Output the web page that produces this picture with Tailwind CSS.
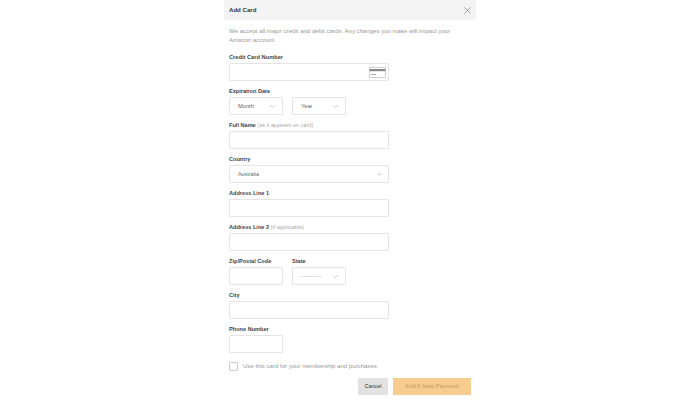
<!DOCTYPE html>
<html lang="en">
<head>
  <meta charset="UTF-8">
  <title>Add Card</title>
  <script src="https://cdn.jsdelivr.net/npm/@tailwindcss/browser@4"></script>
</head>
<body class="bg-white font-['Liberation_Sans',Arial,sans-serif] overflow-hidden">
  <div class="w-[700px] h-[400px] flex justify-center">
    <div class="w-[252px] h-[400px] bg-white">
      <div class="h-[20px] bg-[#f3f4f3] pl-[5px] pr-[5px] flex items-center justify-between">
        <h1 class="text-[6.1px] font-bold text-[#333]">Add Card</h1>
        <svg class="w-[7px] h-[7px]" viewBox="0 0 7 7" fill="none" stroke="#777" stroke-width="0.7"><path d="M0.3 0.3 L6.7 6.7 M6.7 0.3 L0.3 6.7"/></svg>
      </div>

      <div class="pl-[5px] pr-[5px]">
        <p class="mt-[7px] h-[24px] w-[230px] text-[6.05px] leading-[9px] text-[#999]">We accept all major credit and debit cards. Any changes you make will impact your Amazon account.</p>

        <div class="flex flex-col gap-[4px]">
          <div>
            <label class="block h-[12px] leading-[12px] text-[5.7px] font-bold text-[#444]">Credit Card Number</label>
            <div class="w-[160px] h-[18px] border border-[#e4e4e4] rounded-[1px] flex items-center justify-end pr-[2px]">
              <svg class="w-[17px] h-[11px]" viewBox="0 0 17 11" fill="none"><rect x="0.5" y="0.5" width="16" height="10" stroke="#bbb" stroke-width="0.7"/><rect x="0.5" y="2" width="16" height="2.2" fill="#888"/><rect x="2" y="7" width="5" height="0.8" fill="#999"/></svg>
            </div>
          </div>

          <div>
            <label class="block h-[12px] leading-[12px] text-[5.6px] font-bold text-[#444]">Expiration Date</label>
            <div class="flex gap-[9px]">
              <div class="w-[54px] h-[18px] border border-[#e4e4e4] rounded-[1px] flex items-center justify-between pl-[8px] pr-[7px] text-[5.7px] text-[#666]">
                <span>Month</span>
                <svg class="w-[5px] h-[3px]" viewBox="0 0 5 3" fill="none" stroke="#aaa" stroke-width="0.6"><path d="M0.3 0.5 L2.5 2.3 L4.7 0.5"/></svg>
              </div>
              <div class="w-[54px] h-[18px] border border-[#e4e4e4] rounded-[1px] flex items-center justify-between pl-[8px] pr-[7px] text-[5.7px] text-[#666]">
                <span>Year</span>
                <svg class="w-[5px] h-[3px]" viewBox="0 0 5 3" fill="none" stroke="#aaa" stroke-width="0.6"><path d="M0.3 0.5 L2.5 2.3 L4.7 0.5"/></svg>
              </div>
            </div>
          </div>

          <div>
            <label class="block h-[12px] leading-[12px] text-[5.6px] font-bold text-[#444]">Full Name <span class="font-normal text-[#aaa]">(as it appears on card)</span></label>
            <div class="w-[160px] h-[18px] border border-[#e4e4e4] rounded-[1px]"></div>
          </div>

          <div>
            <label class="block h-[12px] leading-[12px] text-[5.6px] font-bold text-[#444]">Country</label>
            <div class="w-[160px] h-[18px] border border-[#e4e4e4] rounded-[1px] flex items-center justify-between pl-[8px] pr-[6px] text-[5.4px] text-[#666]">
              <span>Australia</span>
              <svg class="w-[5px] h-[3px]" viewBox="0 0 5 3" fill="none" stroke="#aaa" stroke-width="0.6"><path d="M0.3 0.5 L2.5 2.3 L4.7 0.5"/></svg>
            </div>
          </div>

          <div>
            <label class="block h-[12px] leading-[12px] text-[5.6px] font-bold text-[#444]">Address Line 1</label>
            <div class="w-[160px] h-[18px] border border-[#e4e4e4] rounded-[1px]"></div>
          </div>

          <div>
            <label class="block h-[12px] leading-[12px] text-[5.6px] font-bold text-[#444]">Address Line 2 <span class="font-normal text-[#aaa]">(if applicable)</span></label>
            <div class="w-[160px] h-[18px] border border-[#e4e4e4] rounded-[1px]"></div>
          </div>

          <div class="flex gap-[9px]">
            <div>
              <label class="block h-[12px] leading-[12px] text-[5.6px] font-bold text-[#444]">Zip/Postal Code</label>
              <div class="w-[54px] h-[18px] border border-[#e4e4e4] rounded-[1px]"></div>
            </div>
            <div>
              <label class="block h-[12px] leading-[12px] text-[5.6px] font-bold text-[#444]">State</label>
              <div class="w-[54px] h-[18px] border border-[#e4e4e4] rounded-[1px] flex items-center justify-between pl-[8px] pr-[7px] text-[5.7px] text-[#aaa]">
                <span>-----------</span>
                <svg class="w-[5px] h-[3px]" viewBox="0 0 5 3" fill="none" stroke="#aaa" stroke-width="0.6"><path d="M0.3 0.5 L2.5 2.3 L4.7 0.5"/></svg>
              </div>
            </div>
          </div>

          <div>
            <label class="block h-[12px] leading-[12px] text-[5.6px] font-bold text-[#444]">City</label>
            <div class="w-[160px] h-[18px] border border-[#e4e4e4] rounded-[1px]"></div>
          </div>

          <div>
            <label class="block h-[12px] leading-[12px] text-[5.6px] font-bold text-[#444]">Phone Number</label>
            <div class="w-[54px] h-[18px] border border-[#e4e4e4] rounded-[1px]"></div>
          </div>
        </div>

        <div class="mt-[9px] flex items-center gap-[5px]">
          <div class="w-[9px] h-[9px] border border-[#ccc] rounded-[1px]"></div>
          <span class="text-[6.05px] text-[#999]">Use this card for your membership and purchases</span>
        </div>

        <div class="mt-[7px] flex justify-end gap-[5px]">
          <button class="w-[30px] h-[17px] bg-[#e2e2e2] text-[5.5px] text-[#333]">Cancel</button>
          <button class="w-[78px] h-[17px] bg-[#f8cb8e] text-[5.85px] text-[#c89a5c]">Add A New Payment</button>
        </div>
      </div>
    </div>
  </div>
</body>
</html>
